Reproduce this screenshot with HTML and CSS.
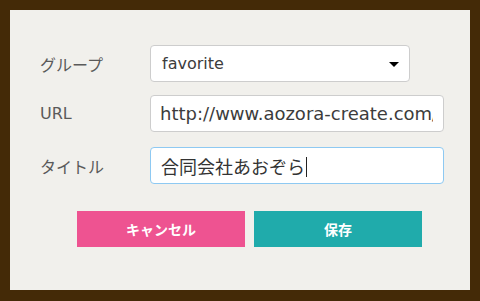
FILE: index.html
```html
<!DOCTYPE html>
<html lang="ja">
<head>
    <meta charset="UTF-8">
    <meta name="viewport" content="width=device-width, initial-scale=1.0">
    <title>ブックマーク編集</title>
    <link rel="stylesheet" href="styles.css">
</head>
<body>
    <div class="panel">
        <form class="bookmark-form">
            <div class="row row-group">
                <label class="label">グループ</label>
                <div class="field select">
                    <span>favorite</span>
                    <span class="arrow"></span>
                </div>
            </div>
            <div class="row row-url">
                <label class="label">URL</label>
                <div class="field wide">
                    <span class="field-text">http://www.aozora-create.com/</span>
                </div>
            </div>
            <div class="row row-title">
                <label class="label">タイトル</label>
                <div class="field wide focused">
                    <span class="field-text">合同会社あおぞら<span class="caret"></span></span>
                </div>
            </div>

            <div class="actions">
                <button type="button" class="btn btn-cancel">キャンセル</button>
                <button type="submit" class="btn btn-save">保存</button>
            </div>
        </form>
    </div>
</body>
</html>
```

FILE: styles.css
```css
/* Reset */
* {
    box-sizing: border-box;
    margin: 0;
    padding: 0;
}

body {
    background: #442a07;
    padding: 10px 10px 11px;
    font-family: "DejaVu Sans", "Noto Sans CJK JP", sans-serif;
    color: #444;
}

/* Panel */
.panel {
    background: #f1f0ec;
    height: 280px;
    padding: 35px 0 0 30px;
}

/* Form rows */
.row {
    display: flex;
    align-items: center;
}

.row-group {
    margin-bottom: 13px;
}

.row-url {
    margin-bottom: 15px;
}

.label {
    width: 110px;
    font-family: "DejaVu Sans", "Noto Sans CJK JP", sans-serif;
    font-size: 16px;
    color: #5a5a5a;
}

.field {
    height: 37px;
    background: #fff;
    border: 1px solid #cdcdcd;
    border-radius: 4px;
    display: flex;
    align-items: center;
    white-space: nowrap;
    color: #3c3c3c;
}

.field-text {
    flex: 1;
    overflow: hidden;
}

.select {
    width: 260px;
    padding: 0 10px 0 11px;
    font-size: 16px;
    justify-content: space-between;
}

.arrow {
    width: 0;
    height: 0;
    border-left: 5px solid transparent;
    border-right: 5px solid transparent;
    border-top: 5px solid #000;
    margin-top: 1px;
}

.wide {
    width: 294px;
    padding: 0 10px 0 9px;
    font-size: 18px;
}

.focused {
    border-color: #8ec9f2;
    font-family: "Noto Sans CJK JP", sans-serif;
    padding-left: 10px;
    color: #333;
}

.caret {
    display: inline-block;
    width: 1px;
    height: 20px;
    background: #222;
    margin-left: 1px;
    vertical-align: -3px;
}

/* Buttons */
.actions {
    display: flex;
    gap: 9px;
    margin: 27px 0 0 37px;
}

.btn {
    width: 168px;
    height: 36px;
    border: none;
    color: #fff;
    font-family: "Noto Sans CJK JP", sans-serif;
    font-weight: bold;
    font-size: 14px;
}

.btn-cancel {
    background: #ee5391;
}

.btn-save {
    background: #20abab;
}
```
